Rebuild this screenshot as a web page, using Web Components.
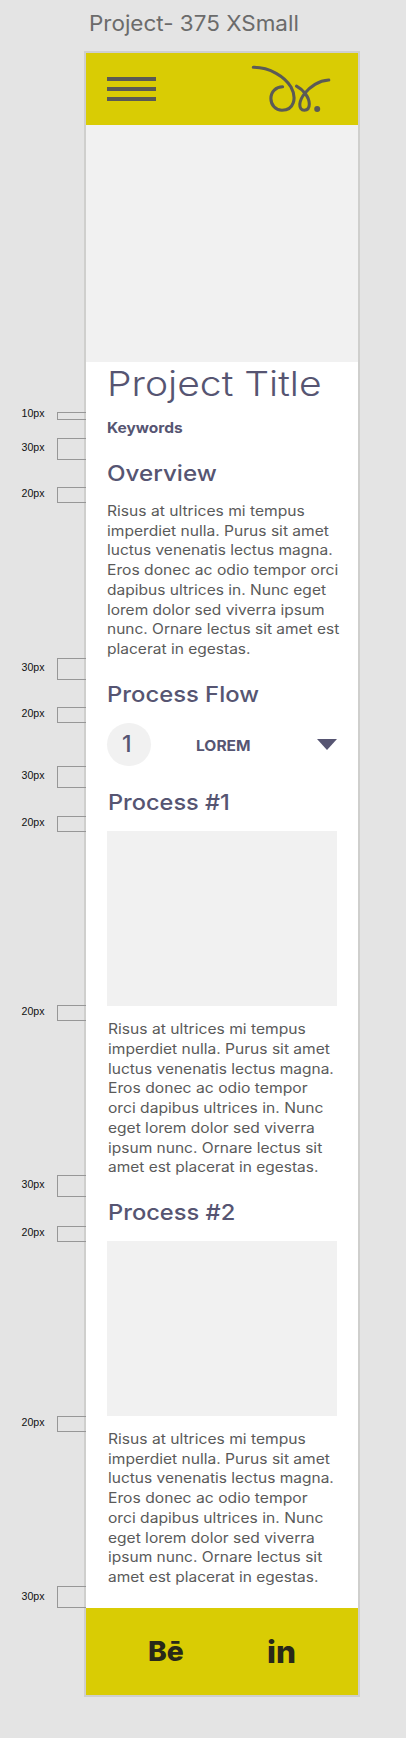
<!DOCTYPE html>
<html lang="en">
<head>
<meta charset="utf-8">
<title>Project- 375 XSmall</title>
<style>
html,body{margin:0;background:#e4e4e4}
body{width:406px;height:1738px;overflow:hidden;font-family:Inter,"Open Sans",sans-serif}
</style>
</head>
<body>
<spec-board></spec-board>
<script>
const define = (name, html, init) => {
  const tpl = document.createElement('template');
  tpl.innerHTML = html;
  customElements.define(name, class extends HTMLElement {
    constructor() {
      super();
      this.attachShadow({mode: 'open'}).append(tpl.content.cloneNode(true));
    }
    connectedCallback() { if (init) init(this, this.shadowRoot); }
  });
};

// One line of text, stretched so that it spans the width given in pixels.
define('fit-line', `<style>:host{display:block;white-space:nowrap}span{display:inline-block;transform-origin:0 50%}</style><span><slot></slot></span>`,
  (el, root) => {
    const span = root.querySelector('span');
    span.style.transform = `scaleX(${+el.getAttribute('w') / span.offsetWidth})`;
  });

define('top-bar', `<style>
:host{display:flex;justify-content:space-between;height:72px;background:#d9cc04;box-sizing:border-box;padding:0 26px 0 21px}
.menu{display:flex;flex-direction:column;gap:6px;padding-top:24px;width:49px}
.menu i{height:4px;background:#5a5a54}
svg{display:block;margin-top:10px}
</style>
<div class="menu"><i></i><i></i><i></i></div>
<svg width="82" height="54" viewBox="250 63 82 54" fill="none" stroke="#5b5b56" stroke-width="3.1" stroke-linecap="round">
<path d="M253.3 67.3C270 67.1 285 77 291 87C297 98 294 110.2 282 110.2C275.500 110.200 270.900 105 270.900 98.500C270.900 91.500 276 86.800 282.600 86.800"/>
<path d="M296.500 86.100C303 89.500 309.300 97 309.300 104C309.300 108 307.300 110.200 304.300 110.200C301.300 110.200 299.600 108 299.800 104.200C300.200 97 308 88.500 315 84.300C319.500 81.600 324 80.300 328.800 80"/>
<circle cx="317.200" cy="109" r="3" fill="#5b5b56" stroke="none"/>
</svg>`);

define('section-title', `<style>:host{display:block;height:28px;font:500 22px/28px Inter,sans-serif;color:#565572}</style><slot></slot>`);

define('body-copy', `<style>:host{display:block;font:400 14px/19.7px Inter,sans-serif;color:#5a5a5a}</style><slot></slot>`);

define('image-slot', `<style>:host{display:block;width:230px;height:175px;background:#f1f1f1}</style>`);

define('flow-row', `<style>
:host{display:flex;align-items:center;height:44px;width:230px;color:#565572}
.num{width:43.5px;height:43.5px;border-radius:50%;background:#f1f1f1;display:flex;justify-content:center;align-items:center}
.num span{font:500 23px/28px Inter,sans-serif;margin-left:-4px}
.name{margin:3px 0 0 45px}
::slotted(*){font:700 14.3px/20px Inter,sans-serif}
.arrow{margin-left:auto}
.arrow svg{display:block}
</style>
<div class="num"><span>1</span></div>
<div class="name"><slot></slot></div>
<div class="arrow"><svg width="20" height="11" viewBox="0 0 20 11"><path d="M0 0H20L10 11Z" fill="#565572"/></svg></div>`);

define('bottom-bar', `<style>
:host{display:flex;height:87px;background:#d9cc04;color:#282819;box-sizing:border-box;padding-left:62px}
.be{font:800 27.500px/34px Inter,sans-serif;margin-top:26px;width:119px}
.in{font:800 31px/38px Inter,sans-serif;margin-top:24.500px}
</style>
<fit-line class="be" w="36">Bē</fit-line><fit-line class="in" w="28.5">in</fit-line>`);

define('phone-frame', `<style>
:host{display:block;box-sizing:border-box;width:276px;height:1646px;border:2px solid #cfcfcd;background:#fff}
.hero{height:237px;background:#f1f1f1}
.content{height:1246px;box-sizing:border-box;padding-left:21px}
h1{margin:0;padding-top:1px;height:46px;box-sizing:border-box;font:300 34.500px/42px Inter,sans-serif;color:#565572}
.key{font:700 14.300px/20px Inter,sans-serif;color:#565572;height:20px;margin-top:10px}
</style>
<top-bar></top-bar>
<div class="hero"></div>
<div class="content">
<h1><fit-line w="215">Project Title</fit-line></h1>
<div class="key"><fit-line w="76">Keywords</fit-line></div>
<section-title style="margin-top:20.500px"><fit-line w="110">Overview</fit-line></section-title>
<body-copy style="margin-top:14.500px">
<fit-line w="197.500">Risus at ultrices mi tempus</fit-line><fit-line w="222.500">imperdiet nulla. Purus sit amet</fit-line><fit-line w="225.500">luctus venenatis lectus magna.</fit-line><fit-line w="231.500">Eros donec ac odio tempor orci</fit-line><fit-line w="219.500">dapibus ultrices in. Nunc eget</fit-line><fit-line w="218">lorem dolor sed viverra ipsum</fit-line><fit-line w="232">nunc. Ornare lectus sit amet est</fit-line><fit-line w="143">placerat in egestas.</fit-line>
</body-copy>
<section-title style="margin-top:21px"><fit-line w="151.500">Process Flow</fit-line></section-title>
<flow-row style="margin-top:14.800px"><fit-line w="54.5">LOREM</fit-line></flow-row>
<section-title style="margin-top:21.500px;padding-left:1.300px"><fit-line w="122">Process #1</fit-line></section-title>
<image-slot style="margin-top:15px"></image-slot>
<body-copy style="margin-top:13.400px;padding-left:1.300px">
<fit-line w="197.500">Risus at ultrices mi tempus</fit-line><fit-line w="222.500">imperdiet nulla. Purus sit amet</fit-line><fit-line w="225.700">luctus venenatis lectus magna.</fit-line><fit-line w="199.500">Eros donec ac odio tempor</fit-line><fit-line w="215.500">orci dapibus ultrices in. Nunc</fit-line><fit-line w="206.500">eget lorem dolor sed viverra</fit-line><fit-line w="214">ipsum nunc. Ornare lectus sit</fit-line><fit-line w="210">amet est placerat in egestas.</fit-line>
</body-copy>
<section-title style="margin-top:21px;padding-left:1.300px"><fit-line w="127">Process #2</fit-line></section-title>
<image-slot style="margin-top:14.700px"></image-slot>
<body-copy style="margin-top:13.400px;padding-left:1.300px">
<fit-line w="197.500">Risus at ultrices mi tempus</fit-line><fit-line w="222.500">imperdiet nulla. Purus sit amet</fit-line><fit-line w="225.700">luctus venenatis lectus magna.</fit-line><fit-line w="199.500">Eros donec ac odio tempor</fit-line><fit-line w="215.500">orci dapibus ultrices in. Nunc</fit-line><fit-line w="206.500">eget lorem dolor sed viverra</fit-line><fit-line w="214">ipsum nunc. Ornare lectus sit</fit-line><fit-line w="210">amet est placerat in egestas.</fit-line>
</body-copy>
</div>
<bottom-bar></bottom-bar>`);

// A spacing note: its label and the bracket that spans the measured gap.
define('gap-note', `<style>
:host{display:flex;align-items:center;box-sizing:border-box;height:var(--h);margin-top:var(--gap);font:400 10.600px/12px "Liberation Sans",Arial,sans-serif;color:#111}
.label{width:35.500px;transform:translateY(var(--dy,0px))}
.bracket{flex:1;height:100%;box-sizing:border-box;border:1px solid #979797;border-right:0}
</style><div class="label"><slot></slot></div><div class="bracket"></div>`);

define('spec-board', `<style>
:host{display:grid;grid-template-columns:84px 276px;grid-template-rows:51px 1646px;width:406px}
.title{grid-column:2;font:400 21.500px/26px Inter,sans-serif;color:#6b6b6b;padding:10px 0 0 4.500px}
.rail{grid-column:1;padding-left:21.500px;margin-right:-1.5px;display:flow-root;z-index:1}
</style>
<div class="title"><fit-line w="210">Project- 375 XSmall</fit-line></div>
<div class="rail"></div>
<phone-frame></phone-frame>`,
  (el, root) => {
    // [top, height, label baseline] of every bracket on the board
    const notes = [[412,8,416.700],[438,22,450.700],[487,16,496.700],[658,22,671],[707,16,717],[766,22,779],[816,16,826],[1005,16,1015],[1175,22,1187.700],[1226,16,1235.700],[1416,16,1426],[1586,22,1599.500]];
    let end = 51;
    for (const [top, h, base] of notes) {
      const note = document.createElement('gap-note');
      note.textContent = h === 8 ? '10px' : h === 22 ? '30px' : '20px';
      note.style.setProperty('--gap', (top - end) + 'px');
      note.style.setProperty('--h', h + 'px');
      note.style.setProperty('--dy', (base - (top + h / 2 + 4)) + 'px');
      root.querySelector('.rail').append(note);
      end = top + h;
    }
  });
</script>
</body>
</html>
